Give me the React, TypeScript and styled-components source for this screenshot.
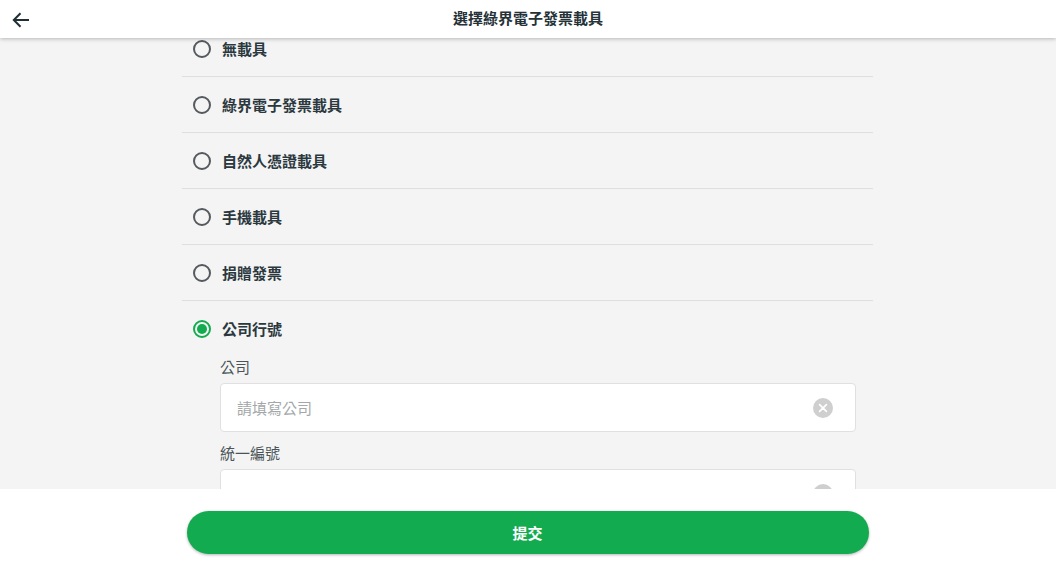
import styled, { createGlobalStyle } from 'styled-components'

const carriers = ['無載具', '綠界電子發票載具', '自然人憑證載具', '手機載具', '捐贈發票', '公司行號']

const GlobalStyle = createGlobalStyle`
  html, body {
    margin: 0;
    padding: 0;
    background: #fff;
    font-family: Roboto, 'Noto Sans CJK TC', sans-serif;
  }
`

const ClearIcon = () => (
  <ClearSvg viewBox="0 0 20 20">
    <circle cx="10" cy="10" r="10" fill="#cfcfcf" />
    <path d="M6.6 6.6l6.8 6.8M13.4 6.6l-6.8 6.8" stroke="#fff" strokeWidth="1.7" strokeLinecap="round" />
  </ClearSvg>
)

const App = () => {
  return (
    <Page>
      <GlobalStyle />
      <Header>
        <BackButton aria-label="back">
          <svg width="20" height="20" viewBox="0 0 20 20" fill="none">
            <path d="M18 10H3M9.5 3.2L2.8 10l6.7 6.8" stroke="#1f2f36" strokeWidth="2" />
          </svg>
        </BackButton>
        <Title>選擇綠界電子發票載具</Title>
      </Header>
      <Scroll>
        <List>
          {carriers.map((name, i) => (
            <Row key={name} $last={i === carriers.length - 1}>
              <Radio $checked={i === carriers.length - 1} />
              <RowLabel>{name}</RowLabel>
            </Row>
          ))}
          <Form>
            <Field>
              <FieldLabel>公司</FieldLabel>
              <InputBox>
                <Placeholder>請填寫公司</Placeholder>
                <ClearIcon />
              </InputBox>
            </Field>
            <Field>
              <FieldLabel>統一編號</FieldLabel>
              <InputBox>
                <Placeholder />
                <ClearIcon />
              </InputBox>
            </Field>
          </Form>
        </List>
      </Scroll>
      <Footer>
        <SubmitButton>提交</SubmitButton>
      </Footer>
    </Page>
  )
}

const Page = styled.div`
  width: 1056px;
  height: 570px;
  display: flex;
  flex-direction: column;
  overflow: hidden;
`

const Header = styled.header`
  position: relative;
  z-index: 2;
  flex: 0 0 38px;
  display: flex;
  align-items: center;
  justify-content: center;
  background: #fff;
  box-shadow: 0 1px 4px rgba(0, 0, 0, 0.25);
`

const BackButton = styled.button`
  position: absolute;
  left: 11px;
  top: 10px;
  width: 20px;
  height: 20px;
  padding: 0;
  border: 0;
  background: none;
  display: flex;
`

const Title = styled.h1`
  margin: 0 0 0 0;
  font-size: 15px;
  line-height: 38px;
  font-weight: 700;
  color: #253238;
`

const Scroll = styled.main`
  flex: 1;
  min-height: 0;
  overflow: hidden;
  background: #f4f4f4;
`

const List = styled.div`
  width: 691px;
  margin: -17px 0 0 182px;
`

const Row = styled.div<{ $last?: boolean }>`
  height: 55px;
  display: flex;
  align-items: center;
  gap: 11px;
  padding-left: 11px;
  border-bottom: ${(p) => (p.$last ? '1px solid transparent' : '1px solid #dedede')};
`

const Radio = styled.span<{ $checked?: boolean }>`
  box-sizing: border-box;
  width: 18px;
  height: 18px;
  border-radius: 50%;
  border: 2px solid ${(p) => (p.$checked ? '#13ab4f' : '#555a5e')};
  display: flex;
  align-items: center;
  justify-content: center;
  &::after {
    content: '';
    display: ${(p) => (p.$checked ? 'block' : 'none')};
    width: 10px;
    height: 10px;
    border-radius: 50%;
    background: #13ab4f;
  }
`

const RowLabel = styled.span`
  font-size: 15px;
  font-weight: 700;
  color: #2b383e;
`

const Form = styled.div`
  padding: 0 17px 0 38px;
  display: flex;
  flex-direction: column;
  gap: 11px;
`

const Field = styled.div`
  display: flex;
  flex-direction: column;
  gap: 4px;
`

const FieldLabel = styled.label`
  font-size: 15px;
  line-height: 22px;
  color: #4a5458;
`

const InputBox = styled.div`
  box-sizing: border-box;
  height: 49px;
  display: flex;
  align-items: center;
  justify-content: space-between;
  padding: 0 22px 0 16px;
  background: #fff;
  border: 1px solid #e0e0e0;
  border-radius: 4px;
`

const Placeholder = styled.span`
  font-size: 15px;
  color: #a3a8aa;
`

const ClearSvg = styled.svg`
  width: 20px;
  height: 20px;
`

const Footer = styled.footer`
  position: relative;
  z-index: 2;
  flex: 0 0 81px;
  background: #fff;
  display: flex;
  justify-content: center;
  padding: 22px 0 0 0;
  box-sizing: border-box;
`

const SubmitButton = styled.button`
  width: 682px;
  height: 43px;
  margin-left: -1px;
  border: 0;
  border-radius: 22px;
  background: #13ab4f;
  box-shadow: 0 1px 3px rgba(0, 0, 0, 0.3);
  color: #fff;
  font-family: inherit;
  font-size: 15px;
  font-weight: 700;
`

export default App
